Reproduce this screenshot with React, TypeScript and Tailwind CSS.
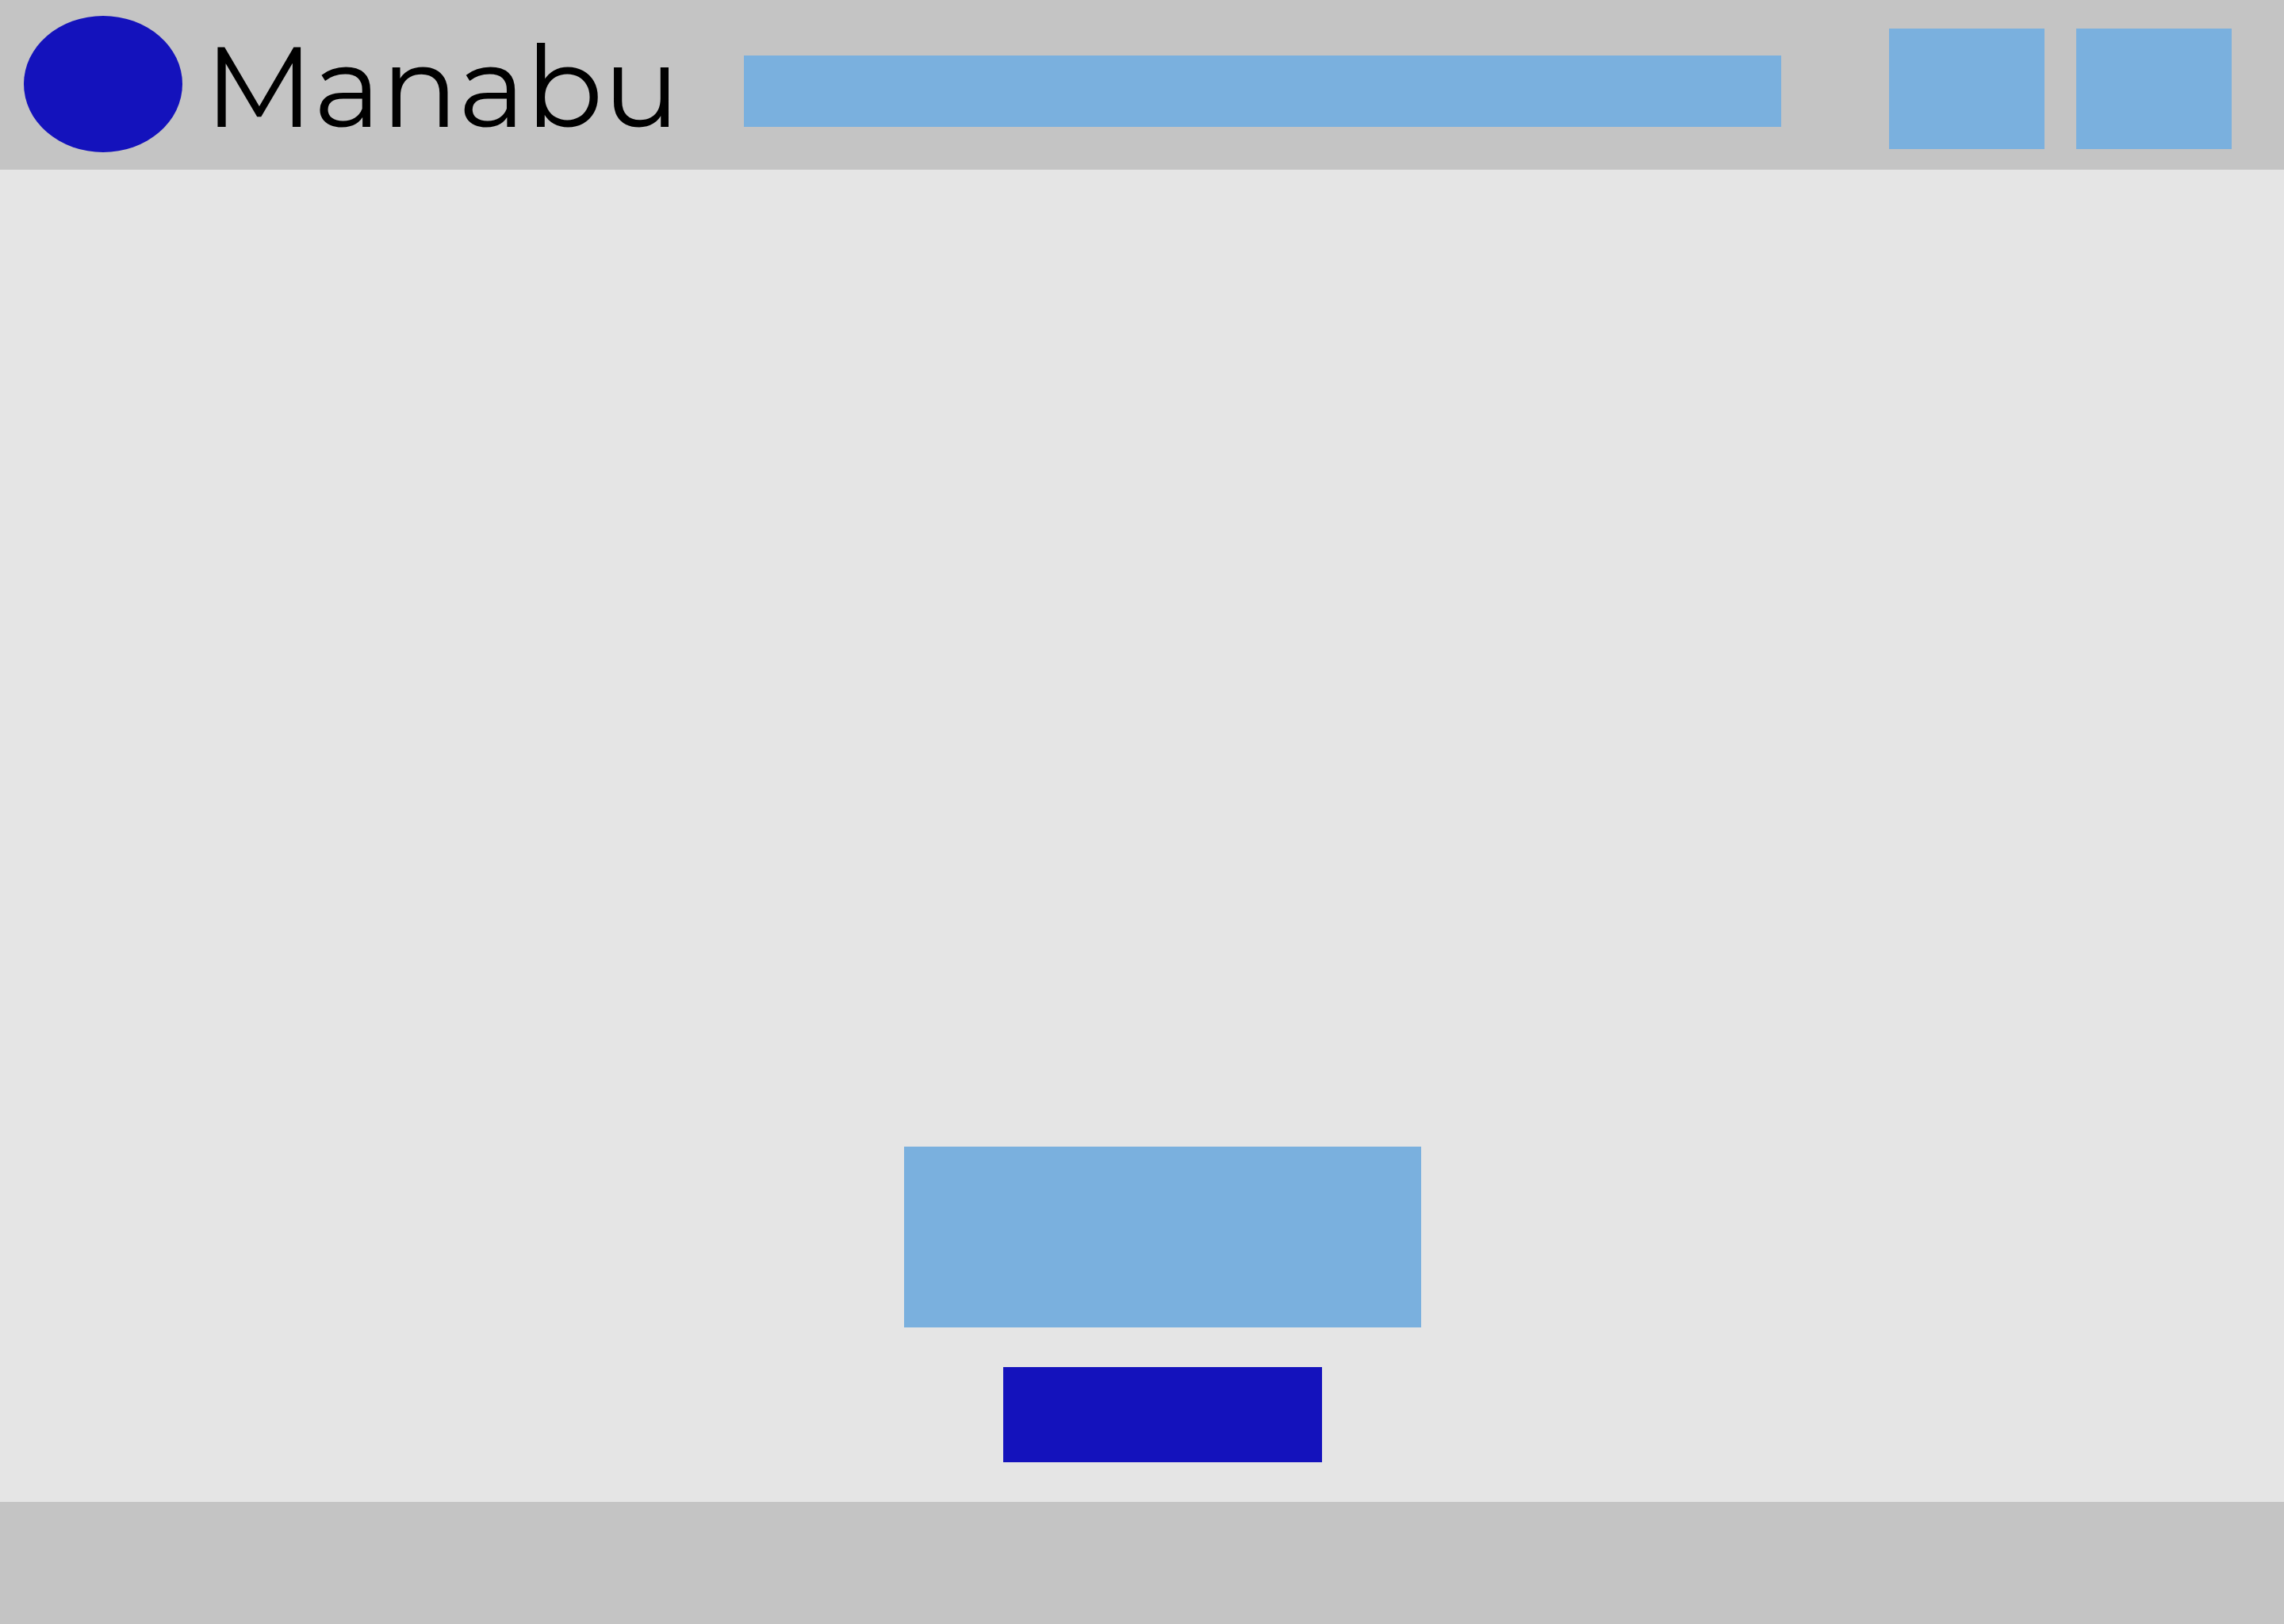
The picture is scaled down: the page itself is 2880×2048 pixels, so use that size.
export default function App() {
  return (
    <div className="flex min-h-screen flex-col bg-[#e5e5e5] font-['Montserrat','Inter',sans-serif] text-black">
      <header className="flex h-[214px] items-start bg-[#c4c4c4] pr-[66px] pl-[30px]">
        <a href="#home" className="flex items-start" aria-label="Manabu">
          <span className="mt-5 h-[172px] w-[200px] rounded-[50%] bg-[#1412bc]" />
          <span className="ml-7 w-[680px] text-[144px] leading-[218px] font-normal">Manabu</span>
        </a>
        <input type="search" aria-label="Search" className="mt-[70px] h-[90px] min-w-0 flex-1 bg-[#7ab0de]" />
        <nav className="mt-9 ml-[136px] flex gap-10">
          <button type="button" aria-label="Notifications" className="h-[152px] w-[196px] bg-[#7ab0de]" />
          <button type="button" aria-label="Account" className="h-[152px] w-[196px] bg-[#7ab0de]" />
        </nav>
      </header>
      <main className="flex flex-1 flex-col items-center justify-end gap-[50px] pb-[50px] pl-[52px]">
        <section aria-label="Introduction" className="h-[228px] w-[652px] bg-[#7ab0de]" />
        <button type="button" aria-label="Start" className="h-[120px] w-[402px] bg-[#1412bc]" />
      </main>
      <footer className="h-[154px] bg-[#c4c4c4]" />
    </div>
  );
}
